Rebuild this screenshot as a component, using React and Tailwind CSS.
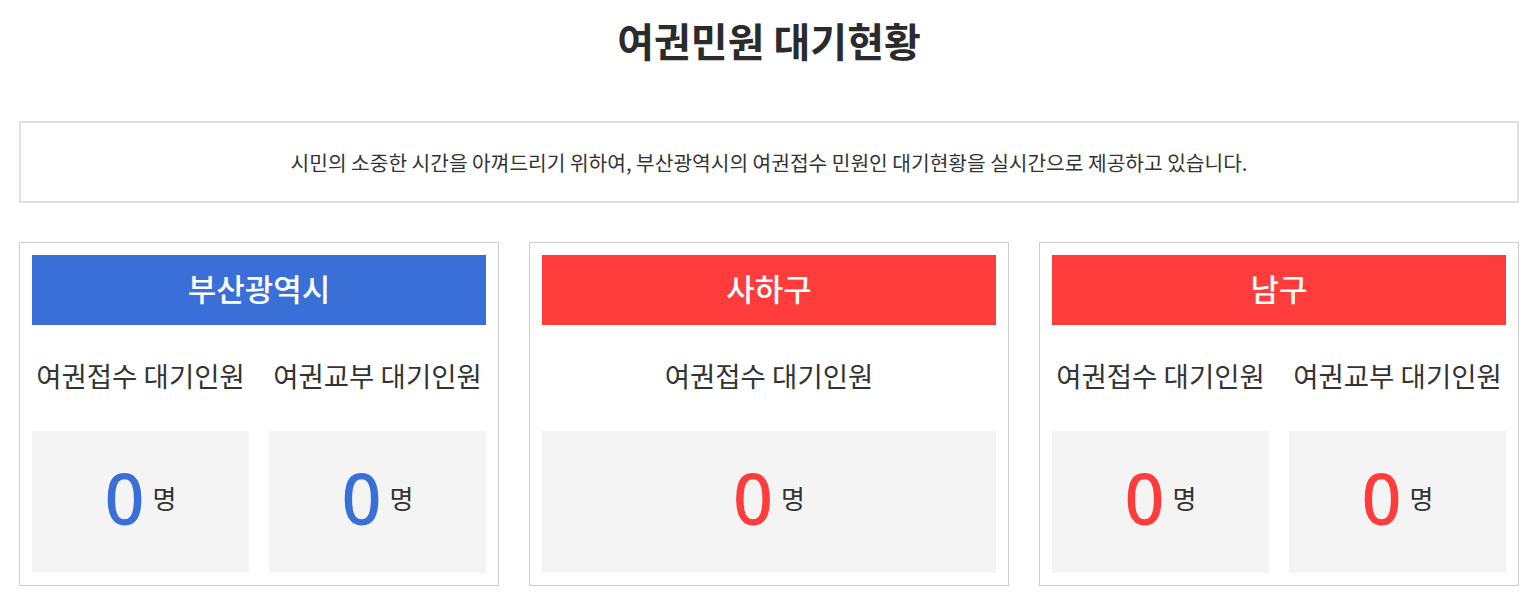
import React from "react";

const offices = [
  {
    name: "부산광역시",
    color: "blue",
    counts: [
      { label: "여권접수 대기인원", value: 0 },
      { label: "여권교부 대기인원", value: 0 },
    ],
  },
  {
    name: "사하구",
    color: "red",
    counts: [{ label: "여권접수 대기인원", value: 0 }],
  },
  {
    name: "남구",
    color: "red",
    counts: [
      { label: "여권접수 대기인원", value: 0 },
      { label: "여권교부 대기인원", value: 0 },
    ],
  },
];

function OfficeCard({ office }) {
  const isBlue = office.color === "blue";
  const single = office.counts.length === 1;

  return (
    <div className="border border-[#cfcfcf] bg-white p-3">
      {/* Header */}
      <div
        className={`flex h-[70px] items-center justify-center pb-1 text-[31px] font-medium text-white ${
          isBlue ? "bg-[#3a6fd8]" : "bg-[#ff3c3c]"
        }`}
      >
        {office.name}
      </div>

      <div className={`grid gap-5 ${single ? "grid-cols-1" : "grid-cols-2"}`}>
        {office.counts.map((c, i) => (
          <div key={i} className="flex flex-col">
            <div className="flex h-[106px] items-center justify-center pb-[5px] text-[27.5px] text-[#333]">
              {c.label}
            </div>
            <div className="flex h-[142px] items-center justify-center gap-[8px] bg-[#f4f4f4] pb-2">
              <span
                className={`font-['Noto_Sans',sans-serif] text-[70px] font-medium leading-none ${
                  isBlue ? "text-[#3a6fd8]" : "text-[#ff3c3c]"
                }`}
              >
                {c.value}
              </span>
              <span className="text-[26px] leading-none text-[#333]">명</span>
            </div>
          </div>
        ))}
      </div>
    </div>
  );
}

export default function App() {
  return (
    <div className="min-h-screen w-full bg-white font-['Noto_Sans_CJK_KR','Noto_Sans',sans-serif] text-[#333]">
      <div className="ml-[19px] w-[1500px]">
        <h1 className="text-center text-[40px] font-bold leading-[80px] text-[#2b2b2b]">
          여권민원 대기현황
        </h1>

        {/* Notice */}
        <div className="mt-[41px] flex h-[82px] items-center justify-center border-2 border-[#e0e0e0] text-[20.3px] text-[#333]">
          시민의 소중한 시간을 아껴드리기 위하여, 부산광역시의 여권접수 민원인 대기현황을 실시간으로 제공하고 있습니다.
        </div>

        {/* Offices */}
        <div className="mt-[39px] grid grid-cols-3 gap-[30px]">
          {offices.map((o) => (
            <OfficeCard key={o.name} office={o} />
          ))}
        </div>
      </div>
    </div>
  );
}
